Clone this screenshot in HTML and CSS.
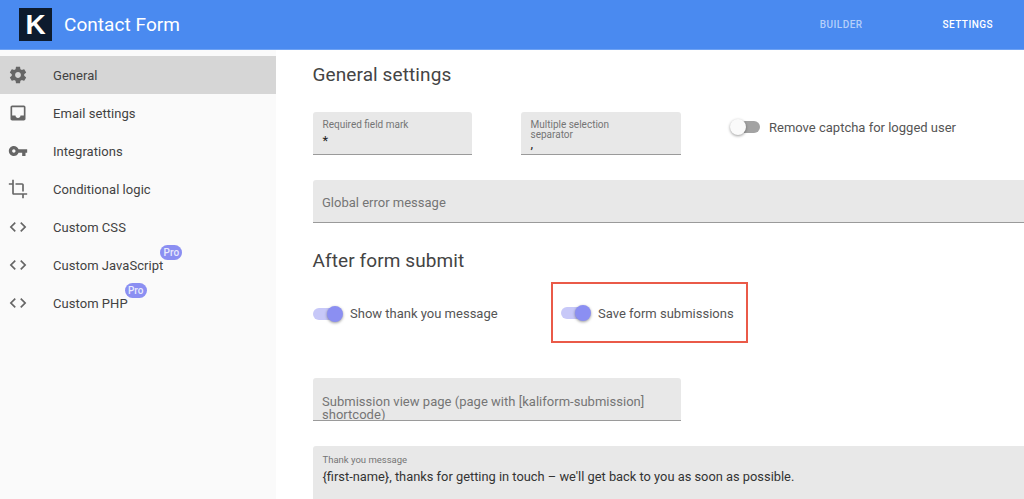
FILE: index.html
```html
<!DOCTYPE html>
<html lang="en">
<head>
<meta charset="utf-8">
<title>Contact Form</title>
<link rel="stylesheet" href="styles.css">
</head>
<body>
<header class="topbar">
  <div class="brand">
    <div class="logo">K</div>
    <div class="title">Contact Form</div>
  </div>
  <nav class="tabs">
    <span class="tab">BUILDER</span>
    <span class="tab tab-active">SETTINGS</span>
  </nav>
</header>
<div class="body">
  <aside class="sidebar">
    <div class="item item-active">
      <svg class="icon" viewBox="0 0 24 24"><path d="M19.43 12.98c.04-.32.07-.64.07-.98s-.03-.66-.07-.98l2.11-1.65c.19-.15.24-.42.12-.64l-2-3.46c-.12-.22-.39-.3-.61-.22l-2.49 1c-.52-.4-1.08-.73-1.69-.98l-.38-2.65C14.46 2.18 14.25 2 14 2h-4c-.25 0-.46.18-.49.42l-.38 2.65c-.61.25-1.17.59-1.69.98l-2.49-1c-.23-.09-.49 0-.61.22l-2 3.46c-.13.22-.07.49.12.64l2.11 1.65c-.04.32-.07.65-.07.98s.03.66.07.98l-2.11 1.65c-.19.15-.24.42-.12.64l2 3.46c.12.22.39.3.61.22l2.49-1c.52.4 1.08.73 1.69.98l.38 2.65c.03.24.24.42.49.42h4c.25 0 .46-.18.49-.42l.38-2.65c.61-.25 1.17-.59 1.69-.98l2.49 1c.23.09.49 0 .61-.22l2-3.46c.12-.22.07-.49-.12-.64l-2.11-1.65zM12 15.5c-1.93 0-3.5-1.57-3.5-3.5s1.57-3.5 3.5-3.5 3.5 1.57 3.5 3.5-1.57 3.5-3.5 3.5z"/></svg>
      <span class="label">General</span>
    </div>
    <div class="item">
      <svg class="icon" viewBox="0 0 24 24"><path d="M19 3H4.99C3.88 3 3.01 3.89 3.01 5L3 19c0 1.1.88 2 1.99 2H19c1.1 0 2-.9 2-2V5c0-1.11-.9-2-2-2zm0 12h-4c0 1.66-1.35 3-3 3s-3-1.34-3-3H4.99V5H19v10z"/></svg>
      <span class="label">Email settings</span>
    </div>
    <div class="item">
      <svg class="icon" viewBox="0 0 24 24"><path d="M12.65 10C11.83 7.67 9.61 6 7 6c-3.31 0-6 2.69-6 6s2.69 6 6 6c2.61 0 4.83-1.67 5.65-4H17v4h4v-4h2v-4H12.65zM7 14c-1.1 0-2-.9-2-2s.9-2 2-2 2 .9 2 2-.9 2-2 2z"/></svg>
      <span class="label">Integrations</span>
    </div>
    <div class="item">
      <svg class="icon" viewBox="0 0 24 24"><path d="M17 15h2V7c0-1.1-.9-2-2-2H9v2h8v8zM7 17V1H5v4H1v2h4v10c0 1.1.9 2 2 2h10v4h2v-4h4v-2H7z"/></svg>
      <span class="label">Conditional logic</span>
    </div>
    <div class="item">
      <svg class="icon" viewBox="0 0 24 24"><path d="M9.4 16.6 4.8 12l4.6-4.6L8 6l-6 6 6 6 1.4-1.4zm5.2 0 4.6-4.6-4.6-4.6L16 6l6 6-6 6-1.4-1.4z"/></svg>
      <span class="label">Custom CSS</span>
    </div>
    <div class="item">
      <svg class="icon" viewBox="0 0 24 24"><path d="M9.4 16.6 4.8 12l4.6-4.6L8 6l-6 6 6 6 1.4-1.4zm5.2 0 4.6-4.6-4.6-4.6L16 6l6 6-6 6-1.4-1.4z"/></svg>
      <span class="label">Custom JavaScript<span class="pro">Pro</span></span>
    </div>
    <div class="item">
      <svg class="icon" viewBox="0 0 24 24"><path d="M9.4 16.6 4.8 12l4.6-4.6L8 6l-6 6 6 6 1.4-1.4zm5.2 0 4.6-4.6-4.6-4.6L16 6l6 6-6 6-1.4-1.4z"/></svg>
      <span class="label">Custom PHP<span class="pro">Pro</span></span>
    </div>
  </aside>
  <main class="main">
    <h2 class="heading heading-first">General settings</h2>
    <div class="row row-fields">
      <div class="field field-small">
        <div class="field-label">Required field mark</div>
        <div class="field-value">*</div>
      </div>
      <div class="field field-small field-second">
        <div class="field-label">Multiple selection<br>separator</div>
        <div class="field-value field-value-tight">,</div>
      </div>
      <div class="switch-wrap switch-captcha">
        <span class="switch"><span class="knob"></span></span>
        <span class="switch-label">Remove captcha for logged user</span>
      </div>
    </div>
    <div class="field field-wide field-placeholder">Global error message</div>
    <h2 class="heading heading-second">After form submit</h2>
    <div class="row row-toggles">
      <div class="switch-wrap switch-thanks">
        <span class="switch switch-on"><span class="knob"></span></span>
        <span class="switch-label">Show thank you message</span>
      </div>
      <div class="switch-wrap switch-save">
        <span class="switch switch-on"><span class="knob"></span></span>
        <span class="switch-label">Save form submissions</span>
      </div>
    </div>
    <div class="field field-page">Submission view page (page with [kaliform-submission] shortcode)</div>
    <div class="field field-wide field-message">
      <div class="message-label">Thank you message</div>
      <div class="message-value">{first-name}, thanks for getting in touch – we'll get back to you as soon as possible.</div>
    </div>
  </main>
</div>
</body>
</html>
```
FILE: styles.css
```css
* { box-sizing: border-box; }
html, body { margin: 0; height: 499px; overflow: hidden; }
body { font-family: Roboto, "Liberation Sans", sans-serif; background: #fff; color: #424242; }

.topbar { height: 50px; background: #4a8af0; border-bottom: 1px solid #6ea2f3; display: flex; align-items: center; justify-content: space-between; color: #fff; }
.brand { display: flex; align-items: center; padding-left: 19px; }
.logo { width: 33px; height: 33px; background: #0d1b2e; color: #fff; font-family: "Liberation Sans", sans-serif; font-weight: 700; font-size: 28px; line-height: 33px; text-align: center; }
.title { margin-left: 12px; font-size: 19px; letter-spacing: .05px; }
.tabs { display: flex; gap: 80px; padding-right: 31px; font-size: 10px; font-weight: 500; letter-spacing: .45px; }
.tab { color: #b4cffa; }
.tab-active { color: #fff; }

.body { display: flex; height: 449px; }
.sidebar { width: 276px; flex: none; background: #fafafa; padding-top: 6px; }
.item { height: 38px; display: flex; align-items: center; padding-left: 8px; font-size: 13px; color: #424242; }
.item-active { background: #d6d6d6; }
.icon { width: 20px; height: 20px; flex: none; fill: #666; }
.label { margin-left: 25px; position: relative; letter-spacing: .05px; }
.pro { position: absolute; top: -13px; right: -19px; width: 22px; height: 15px; border-radius: 8px; background: #8b8ff2; color: #e9eafc; font-size: 10px; font-weight: 500; line-height: 15px; text-align: center; }

.main { flex: 1; min-width: 0; padding-left: 37px; }
.heading { margin: 0; font-size: 19px; font-weight: 400; line-height: 24px; color: #444; letter-spacing: .1px; position: relative; left: -.5px; }
.heading-first { margin-top: 13px; }
.heading-second { margin-top: 26px; }

.row { display: flex; }
.row-fields { margin-top: 25px; align-items: flex-start; }
.row-toggles { margin-top: 9px; height: 61px; align-items: stretch; }

.field { background: #e8e8e8; border-bottom: 1px solid #9a9a9a; border-radius: 3px 3px 0 0; color: #757575; }
.field-small { width: 159px; height: 43px; padding: 8px 9.5px 0; }
.field-second { margin-left: 49px; width: 160px; }
.field-label { font-size: 10px; line-height: 10px; }
.field-value { font-size: 13px; line-height: 14px; margin-top: 3.5px; color: #222; }
.field-value-tight { line-height: 9px; margin-top: -1.5px; }
.field-wide { width: 760px; }
.field-placeholder { height: 43px; margin-top: 25px; padding: 15px 9px 0; font-size: 13px; line-height: 16px; }
.field-page { width: 368px; height: 43px; margin-top: 35px; padding: 17px 9px 0; font-size: 13px; line-height: 13px; letter-spacing: .02px; overflow: hidden; }
.field-message { height: 60px; margin-top: 25px; padding: 8px 9.5px 0; border: 0; }
.message-label { font-size: 9.5px; line-height: 11px; color: #757575; }
.message-value { margin-top: 4px; font-size: 12.85px; line-height: 16px; color: #333; }

.switch-wrap { display: flex; align-items: center; }
.switch-captcha { margin-left: 50px; margin-top: 7px; height: 16px; }
.switch { display: block; position: relative; width: 29px; height: 12px; border-radius: 6px; background: #a3a3a3; flex: none; }
.switch-on { background: #c7c8f8; }
.knob { position: absolute; left: -1px; top: -2px; width: 16px; height: 16px; border-radius: 50%; background: #fafafa; box-shadow: 0 1px 3px rgba(0,0,0,.4); }
.switch-on .knob { left: auto; right: -1px; background: #8b8ff2; }
.switch-label { margin-left: 8px; font-size: 13px; color: #555; }
.switch-captcha .switch-label { margin-left: 9px; }
.switch-thanks { width: 238px; padding-top: 2px; }
.switch-save { width: 197px; border: 2px solid #ea5a48; padding: 1px 0 0 8px; }
```
